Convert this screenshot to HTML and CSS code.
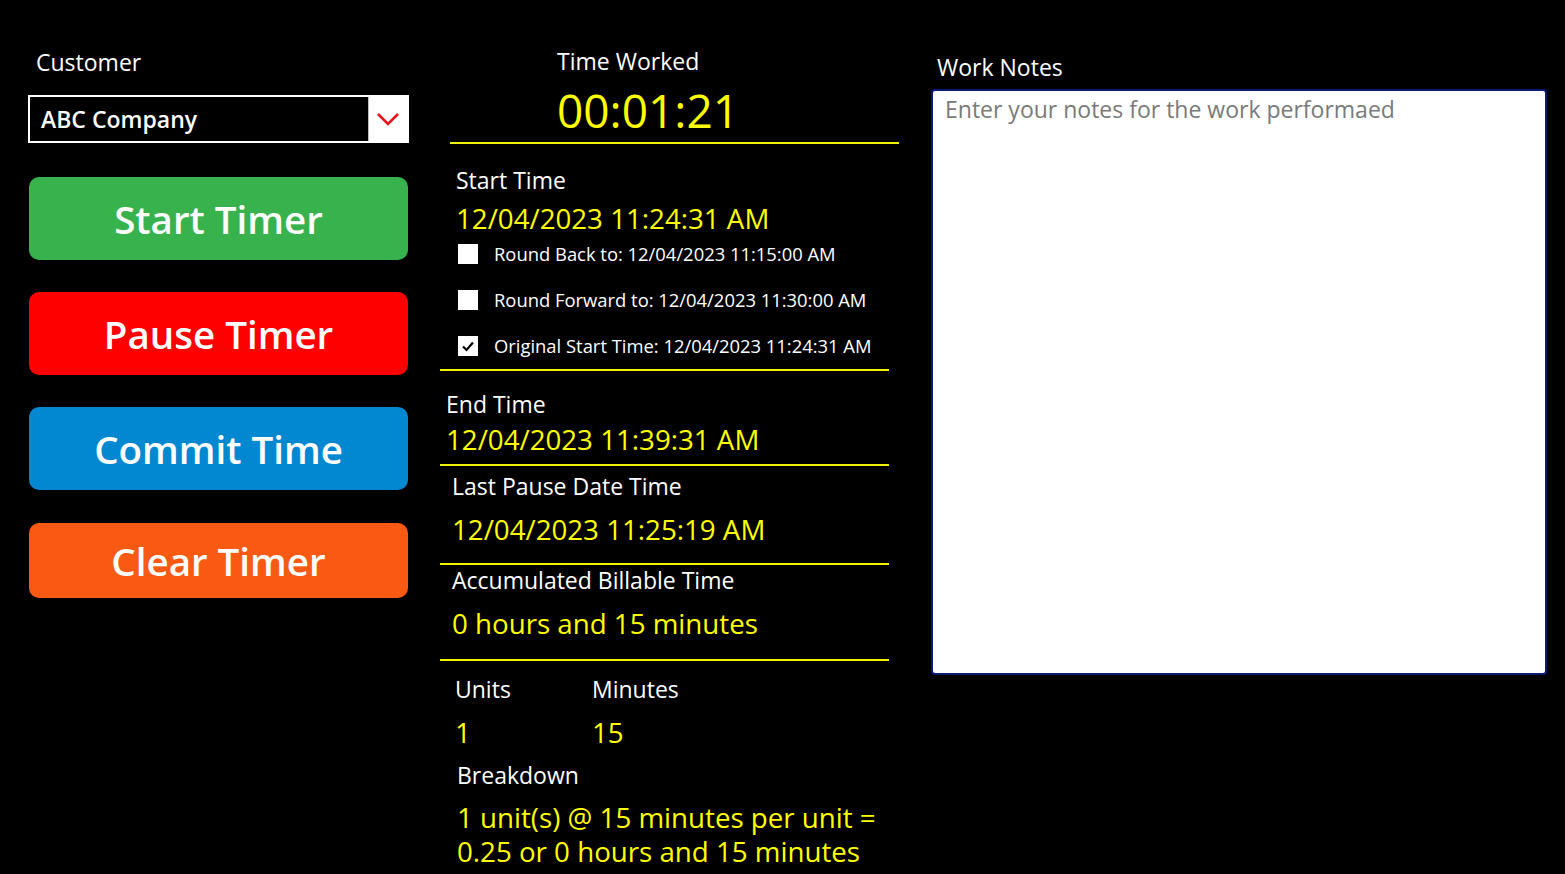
FILE: index.html
```html
<!DOCTYPE html>
<html lang="en">
<head>
<meta charset="utf-8">
<title>Time Tracker</title>
<link rel="stylesheet" href="styles.css">
</head>
<body>
<div class="page">
  <div class="col-left">
    <div class="label customer-label">Customer</div>
    <div class="dropdown">
      <span class="dropdown-value">ABC Company</span>
      <span class="dropdown-btn">
        <svg width="24" height="14" viewBox="0 0 24 14"><polyline points="2,2 12,12 22,2" fill="none" stroke="#e8141b" stroke-width="2.6"/></svg>
      </span>
    </div>
    <div class="btn btn-start">Start Timer</div>
    <div class="btn btn-pause">Pause Timer</div>
    <div class="btn btn-commit">Commit Time</div>
    <div class="btn btn-clear">Clear Timer</div>
  </div>

  <div class="col-mid">
    <div class="sec sec-worked">
      <div class="label">Time Worked</div>
      <div class="clock">00:01:21</div>
    </div>

    <div class="sec sec-start">
      <div class="label lbl-start">Start Time</div>
      <div class="value val-start">12/04/2023 11:24:31 AM</div>
      <div class="check-row first"><span class="box"></span><span class="check-text">Round Back to: 12/04/2023 11:15:00 AM</span></div>
      <div class="check-row"><span class="box"></span><span class="check-text">Round Forward to: 12/04/2023 11:30:00 AM</span></div>
      <div class="check-row"><span class="box"><svg width="14" height="12" viewBox="0 0 14 12"><polyline points="2,6.5 5.5,10 12,2.5" fill="none" stroke="#000" stroke-width="2.2"/></svg></span><span class="check-text">Original Start Time: 12/04/2023 11:24:31 AM</span></div>
    </div>

    <div class="sec sec-end">
      <div class="label lbl-end">End Time</div>
      <div class="value val-end">12/04/2023 11:39:31 AM</div>
    </div>

    <div class="sec sec-pause">
      <div class="label lbl-pause">Last Pause Date Time</div>
      <div class="value val-pause">12/04/2023 11:25:19 AM</div>
    </div>

    <div class="sec sec-acc">
      <div class="label lbl-acc">Accumulated Billable Time</div>
      <div class="value val-acc">0 hours and 15 minutes</div>
    </div>

    <div class="sec-units">
      <div class="units-grid">
        <div class="label">Units</div>
        <div class="label">Minutes</div>
        <div class="value">1</div>
        <div class="value">15</div>
      </div>
      <div class="breakdown">
        <div class="label">Breakdown</div>
        <div class="value breakdown-text">1 unit(s) @ 15 minutes per unit = 0.25 or 0 hours and 15 minutes</div>
      </div>
    </div>
  </div>

  <div class="col-right">
    <div class="label notes-label">Work Notes</div>
    <textarea class="notes" placeholder="Enter your notes for the work performaed"></textarea>
  </div>
</div>
</body>
</html>
```

FILE: styles.css
```css
html, body {
  margin: 0;
  padding: 0;
  background: #000;
}
body {
  font-family: "Open Sans", "Noto Sans", "Liberation Sans", sans-serif;
  color: #fff;
  width: 1565px;
  height: 874px;
  overflow: hidden;
}
.page {
  display: flex;
  align-items: flex-start;
}
.label {
  font-size: 23px;
  line-height: 30px;
  color: #fff;
}
.value {
  font-size: 27.7px;
  line-height: 34px;
  color: #ffff00;
}

/* Left column */
.col-left {
  margin-left: 28px;
  width: 381px;
  display: flex;
  flex-direction: column;
}
.customer-label {
  margin-top: 47px;
  padding-left: 8px;
}
.dropdown {
  margin-top: 18px;
  height: 48px;
  box-sizing: border-box;
  border: 2px solid #fff;
  display: flex;
  align-items: stretch;
}
.dropdown-value {
  flex: 1;
  padding-left: 11px;
  font-size: 23px;
  font-weight: 600;
  line-height: 44px;
}
.dropdown-btn {
  width: 38px;
  background: #fff;
  border-left: 1px solid #bdbdbd;
  display: flex;
  align-items: center;
  justify-content: center;
}
.btn {
  margin-left: 1px;
  width: 379px;
  height: 83px;
  border-radius: 10px;
  display: flex;
  align-items: center;
  justify-content: center;
  font-size: 38.5px;
  font-weight: 600;
  color: #fff;
}
.btn-start { margin-top: 34px; background: #37b24d; }
.btn-pause { margin-top: 32px; background: #ff0000; }
.btn-commit { margin-top: 32px; background: #0288d1; }
.btn-clear { margin-top: 33px; height: 75px; background: #f85a14; }

/* Middle column */
.col-mid {
  margin-left: 31px;
  width: 459px;
  display: flex;
  flex-direction: column;
}
.sec {
  border-bottom: 2px solid #f2f200;
}
.sec-worked {
  margin-left: 10px;
  padding-left: 107px;
  padding-top: 46px;
  padding-bottom: 4px;
}
.clock {
  margin-top: 6px;
  font-size: 46px;
  line-height: 56px;
  color: #ffff00;
}
.sec-start {
  width: 449px;
  padding-left: 16px;
  box-sizing: border-box;
}
.lbl-start { margin-top: 21px; }
.val-start { margin-top: 6px; }
.check-row {
  height: 46px;
  display: flex;
  align-items: center;
  padding-left: 2px;
}
.check-row.first { margin-top: -4px; }
.box {
  width: 20px;
  height: 20px;
  background: #fff;
  display: flex;
  align-items: center;
  justify-content: center;
  flex: none;
}
.check-text {
  margin-left: 16px;
  font-size: 18.4px;
  line-height: 46px;
  color: #fff;
}
.sec-end, .sec-pause, .sec-acc {
  width: 449px;
  box-sizing: border-box;
}
.sec-end { padding-left: 6px; padding-bottom: 8px; }
.lbl-end { margin-top: 18px; }
.val-end { margin-top: 3px; }
.sec-pause { padding-left: 12px; padding-bottom: 17px; }
.lbl-pause { margin-top: 5px; }
.val-pause { margin-top: 11px; }
.sec-acc { padding-left: 12px; padding-bottom: 19px; }
.lbl-acc { margin-top: 0; }
.val-acc { margin-top: 11px; }
.sec-units {
  padding-left: 15px;
}
.units-grid {
  margin-top: 13px;
  display: grid;
  grid-template-columns: 137px auto;
  row-gap: 11px;
}
.breakdown {
  padding-left: 2px;
  margin-top: 11px;
}
.breakdown-text {
  margin-top: 10px;
  width: 430px;
  font-size: 27.7px;
  line-height: 34px;
}

/* Right column */
.col-right {
  margin-left: 32px;
  width: 616px;
  display: flex;
  flex-direction: column;
}
.notes-label {
  margin-top: 52px;
  padding-left: 6px;
}
.notes {
  margin: 7px 0 0 0;
  width: 616px;
  height: 586px;
  box-sizing: border-box;
  border: 2px solid #0b1a78;
  border-radius: 4px;
  background: #fff;
  padding: 1px 12px;
  font-family: "Open Sans", "Noto Sans", sans-serif;
  font-size: 23px;
  line-height: 34px;
  color: #333;
  resize: none;
  outline: none;
}
.notes::placeholder {
  color: #7a7a7a;
  opacity: 1;
}
```
